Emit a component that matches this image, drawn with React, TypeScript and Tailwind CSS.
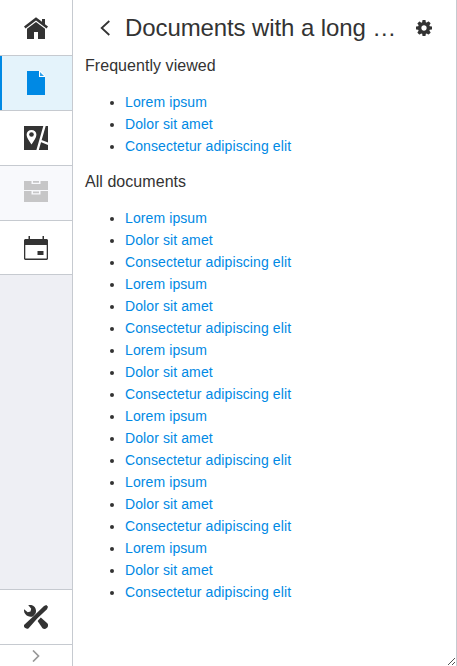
import type { ReactNode } from 'react';

const documents = ['Lorem ipsum', 'Dolor sit amet', 'Consectetur adipiscing elit'];

function Icon({ children }: { children: ReactNode }) {
  return (
    <svg viewBox="0 0 24 24" className="size-6 shrink-0" fill="currentColor">
      {children}
    </svg>
  );
}

function Tab({ children, className }: { children: ReactNode; className: string }) {
  return (
    <button className={`flex w-full shrink-0 items-center justify-center border-[#c6cad0] ${className}`}>
      {children}
    </button>
  );
}

function Links({ items }: { items: string[] }) {
  return (
    <ul className="ml-10 list-disc text-[14px] leading-[22px] tracking-[0.1px]">
      {items.map((item, i) => (
        <li key={i}>
          <a className="text-[#0089e4]" href="#">{item}</a>
        </li>
      ))}
    </ul>
  );
}

export default function App() {
  return (
    <div className="flex h-[666px] w-[457px] overflow-hidden border-r border-[#c6cad0] bg-white font-['Liberation_Sans',Arial,sans-serif] text-[#333333]">
      <nav className="flex w-[73px] shrink-0 flex-col border-r border-[#c6cad0] bg-[#eeeff4]">
        <Tab className="h-14 border-b bg-white">
          <Icon>
            <path d="M0 10.5 12 1.2l6 4.6V3h3v5.2l3 2.3-1.5 2L12 4.6 1.5 12.5z" />
            <path d="M3 12.7 12 6l9 6.7V23h-7v-7h-4v7H3z" />
          </Icon>
        </Tab>
        <Tab className="h-[55px] border-b bg-[#e4f3fb] text-[#0089e4]">
          <span className="h-full w-0.5 bg-[#0089e4]" />
          <span className="flex grow justify-center pr-0.5">
            <Icon>
              <path d="M3 0h12v6h6v18H3z" />
              <path d="M15 0h1.5L21 4.5V6h-6z" fill="white" />
              <path d="M16 1 20 5h-4z" opacity=".8" />
            </Icon>
          </span>
        </Tab>
        <Tab className="h-[55px] border-b bg-white">
          <Icon>
            <path d="M0 0h24v24H0z" />
            <path d="M7.5 18.5C5 14.8 2.6 11.8 2.6 8.8a4.9 4.9 0 0 1 9.8 0c0 3-2.4 6-4.9 9.7z" fill="white" />
            <circle cx="7.5" cy="8.5" r="2.3" />
            <path d="m20.8 -1-7.5 26M16.5 14.8l8 3.2" stroke="white" strokeWidth="2.3" />
          </Icon>
        </Tab>
        <Tab className="h-[55px] border-b bg-[#f8f9fc] text-[#c6c6c7]">
          <Icon>
            <path d="M0 0h7.5v3h9V0H24v9H0zM9 0h6v1.8H9zM0 10h7.5v3.5h9V10H24v11H0zM9 10.5h6v1.8H9z" />
          </Icon>
        </Tab>
        <Tab className="h-[54px] border-b bg-white">
          <Icon>
            <path d="M4.5 0H6v4H4.5zM18.5 0H20v4h-1.5z" />
            <path d="M1 3h22l1 1v19l-1 1H1l-1-1V4zM1.3 9v13.6h21.4V9z" fillRule="evenodd" />
            <path d="M13.5 15h6v4h-6z" />
          </Icon>
        </Tab>
        <div className="grow" />
        <Tab className="h-14 border-y bg-white">
          <Icon>
            <path d="M4.2 0C8.2-1 12.2 2 12 6c0 1-.1 1.8-.5 2.6L9.2 11.3c-2.7 1.2-6.2.2-7.9-2.2C.2 7.6-.2 6 .1 4.3l3.6 3 2.8-.7.7-2.8z" />
            <path d="m0 20 9.7-9L20 .9 22.3 0 24 1.8l-1 2.5L13.2 13.5l-8.8 9.9c-1.5 1.5-5.4-1.2-4.4-3.4z" />
            <path d="m13.6 16 3.2-3.4 6.5 5.7c2.6 3-1.8 7.4-4.8 5z" />
          </Icon>
        </Tab>
        <button className="flex h-[21px] shrink-0 items-center justify-center bg-white text-[#999999]">
          <svg width="8" height="12" viewBox="0 0 8 12" fill="none" stroke="currentColor" strokeWidth="1.7">
            <path d="m1 .5 5.5 5.5L1 11.5" />
          </svg>
        </button>
      </nav>
      <main className="relative min-w-0 grow px-3">
        <header className="flex h-[55px] items-center">
          <button className="flex w-10 shrink-0 justify-center">
            <svg width="10" height="16" viewBox="0 0 10 16" fill="none" stroke="currentColor" strokeWidth="1.8">
              <path d="M9.3 1 1.7 8l7.6 7" />
            </svg>
          </button>
          <h1 className="min-w-0 grow truncate text-2xl tracking-[-0.1px]">Documents with a long …</h1>
          <button className="flex w-10 shrink-0 justify-center">
            <svg className="size-4" viewBox="0 128 1536 1536" fill="currentColor">
              <path d="M1024 896q0-106-75-181t-181-75-181 75-75 181 75 181 181 75 181-75 75-181zm512-109v222q0 12-8 23t-20 13l-185 28q-19 54-39 91 35 50 107 138 10 12 10 25t-9 23q-27 37-99 108t-94 71q-12 0-26-9l-138-108q-44 23-91 38-16 136-29 186-7 28-36 28h-222q-14 0-24.5-8.5t-11.5-21.5l-28-184q-49-16-90-37l-141 107q-10 9-25 9-14 0-25-11-126-114-165-168-7-10-7-23 0-12 8-23 15-21 51-66.5t54-70.5q-27-50-41-99l-183-27q-13-2-21-12.5t-8-23.5v-222q0-12 8-23t19-13l186-28q14-46 39-92-40-57-107-138-10-12-10-24 0-10 9-23 26-36 98.5-107.5t94.5-71.5q13 0 26 10l138 107q44-23 91-38 16-136 29-186 7-28 36-28h222q14 0 24.5 8.5t11.5 21.5l28 184q49 16 90 37l142-107q9-9 24-9 13 0 25 10 129 119 165 170 7 8 7 22 0 12-8 23-15 21-51 66.5t-54 70.5q26 50 41 98l183 28q13 2 21 12.5t8 23.5z" />
            </svg>
          </button>
        </header>
        <h2 className="mb-3.5 h-[22px] text-base leading-[22px] tracking-[0.05px]">Frequently viewed</h2>
        <Links items={documents} />
        <h2 className="mt-3.5 mb-3.5 h-[22px] text-base leading-[22px] tracking-[0.05px]">All documents</h2>
        <Links items={Array.from({ length: 6 }, () => documents).flat()} />
        <svg className="absolute right-0 bottom-0" width="9" height="9" viewBox="0 0 9 9" fill="none" stroke="#555555">
          <path d="m1 8 7-7M5 8l3-3" />
        </svg>
      </main>
    </div>
  );
}
